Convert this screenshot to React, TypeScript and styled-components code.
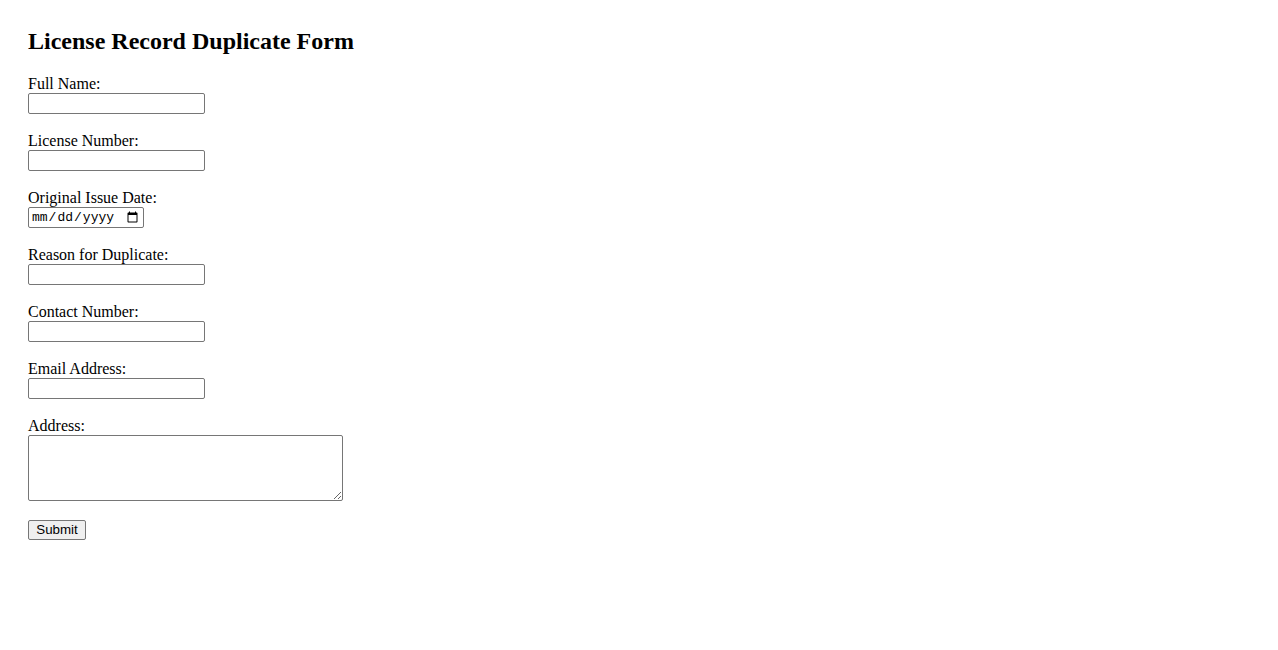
import React from 'react';
import styled, { createGlobalStyle } from 'styled-components';

const GlobalStyle = createGlobalStyle`
  body {
    margin: 0;
    background: #ffffff;
    color: #000000;
    font-family: "Liberation Serif", "Times New Roman", serif;
  }
`;

const Page = styled.div`
  padding: 27px 28px;
`;

const Title = styled.h2`
  margin: 0 0 18px;
  font-size: 24px;
  line-height: 28px;
  font-weight: 700;
`;

const Form = styled.form`
  display: flex;
  flex-direction: column;
  align-items: flex-start;
`;

const Group = styled.div`
  margin-bottom: 16px;
`;

const Label = styled.label`
  display: block;
  font-size: 16px;
  line-height: 18px;
  padding-top: 2px;
`;

const Field = styled.input<{ $width: number }>`
  display: block;
  box-sizing: border-box;
  width: ${(p) => p.$width}px;
  height: 21px;
  margin: 0;
  padding: 1px 2px;
  border: 1px solid #767676;
  border-radius: 2px;
  background: #ffffff;
  font-family: "Liberation Sans", Arial, sans-serif;
  font-size: 13.33px;

  &[type='date'] {
    font-family: "Liberation Mono", "Courier New", monospace;
    font-size: 13px;
    padding: 0 2px;
  }
`;

const Area = styled.textarea`
  display: block;
  box-sizing: border-box;
  width: 315px;
  height: 66px;
  margin: 0 0 3px;
  padding: 2px;
  border: 1px solid #767676;
  border-radius: 2px;
  font-family: "Liberation Mono", monospace;
  font-size: 13.33px;
`;

const Submit = styled.button`
  box-sizing: border-box;
  width: 58px;
  height: 20px;
  padding: 0 6px;
  border: 1px solid #767676;
  border-radius: 2px;
  background: #efefef;
  color: #000000;
  font-family: "Liberation Sans", Arial, sans-serif;
  font-size: 13.33px;
  line-height: 16px;
`;

const fields = [
  { id: 'fullName', label: 'Full Name:', type: 'text', width: 177 },
  { id: 'licenseNumber', label: 'License Number:', type: 'text', width: 177 },
  { id: 'issueDate', label: 'Original Issue Date:', type: 'date', width: 116 },
  { id: 'reason', label: 'Reason for Duplicate:', type: 'text', width: 177 },
  { id: 'contact', label: 'Contact Number:', type: 'tel', width: 177 },
  { id: 'email', label: 'Email Address:', type: 'email', width: 177 },
];

const App = () => {
  return (
    <Page>
      <GlobalStyle />
      <Title>License Record Duplicate Form</Title>
      <Form onSubmit={(e) => e.preventDefault()}>
        {fields.map((f) => (
          <Group key={f.id}>
            <Label htmlFor={f.id}>{f.label}</Label>
            <Field id={f.id} type={f.type} $width={f.width} />
          </Group>
        ))}
        <Group>
          <Label htmlFor="address">Address:</Label>
          <Area id="address" />
        </Group>
        <Submit type="submit">Submit</Submit>
      </Form>
    </Page>
  );
};

export default App;
